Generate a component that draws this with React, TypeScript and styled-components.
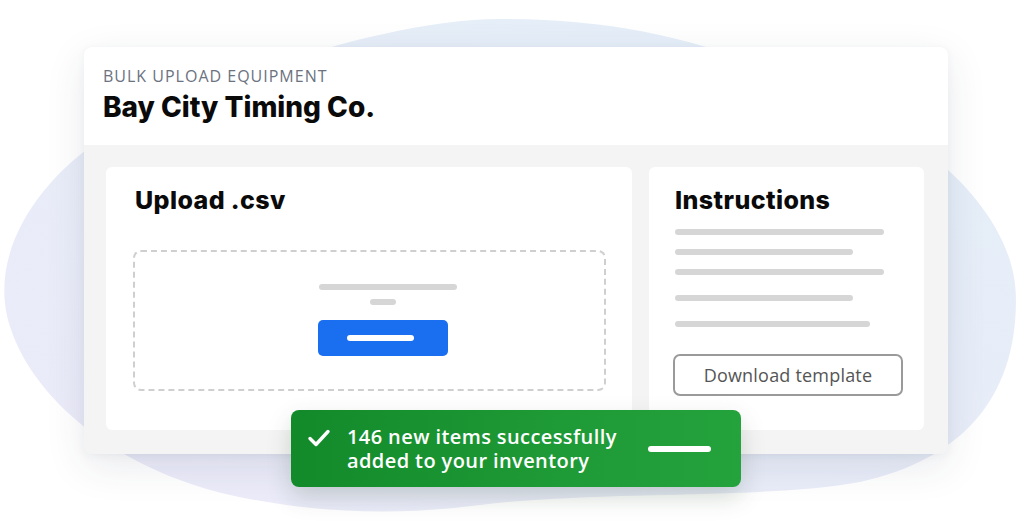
import React from "react";
import styled, { createGlobalStyle } from "styled-components";

const GlobalStyle = createGlobalStyle`
  body {
    margin: 0;
    background: #ffffff;
    font-family: "Open Sans", "Liberation Sans", sans-serif;
  }
`;

const Stage = styled.div`
  position: relative;
  width: 1024px;
  height: 526px;
  overflow: hidden;
  padding: 47px 0 0 84px;
  box-sizing: border-box;
`;

const Blob = styled.svg`
  position: absolute;
  left: 0;
  top: 0;
  z-index: 0;
`;

const Card = styled.div`
  position: relative;
  z-index: 1;
  width: 864px;
  border-radius: 8px;
  overflow: hidden;
  background: #f4f4f4;
  box-shadow: 0 12px 40px rgba(40, 50, 80, 0.1), 0 2px 8px rgba(40, 50, 80, 0.05);
`;

const Header = styled.div`
  background: #ffffff;
  height: 98px;
  box-sizing: border-box;
  padding: 19px 19px 0;
`;

const Eyebrow = styled.div`
  font-size: 16px;
  line-height: 20px;
  letter-spacing: 1px;
  color: #6b7280;
`;

const Company = styled.div`
  margin-top: 5px;
  font-family: Inter, "Liberation Sans", sans-serif;
  font-weight: 800;
  font-size: 28px;
  line-height: 32px;
  color: #0a0a0a;
`;

const Body = styled.div`
  display: flex;
  gap: 17px;
  padding: 22px 24px 24px 22px;
`;

const Panel = styled.div<{ $width: number; $pad: number }>`
  width: ${(p) => p.$width}px;
  height: 263px;
  box-sizing: border-box;
  background: #ffffff;
  border-radius: 6px;
  padding: 19px 0 0 ${(p) => p.$pad}px;
  display: flex;
  flex-direction: column;
`;

const PanelTitle = styled.div`
  font-family: Inter, "Liberation Sans", sans-serif;
  font-weight: 800;
  font-size: 25px;
  line-height: 28px;
  letter-spacing: 0.4px;
  color: #0a0a0a;
`;

const DropZone = styled.div`
  margin: 36px 0 0 -2px;
  width: 473px;
  height: 141px;
  box-sizing: border-box;
  border: 2px dashed #cfcfcf;
  border-radius: 8px;
  display: flex;
  flex-direction: column;
  align-items: center;
  padding: 32px 0 0 26px;
`;

const Bar = styled.div<{ $w: number; $color?: string; $shift?: number }>`
  width: ${(p) => p.$w}px;
  height: 6px;
  border-radius: 3px;
  background: ${(p) => p.$color || "#d6d6d6"};
  transform: translateX(${(p) => p.$shift || 0}px);
`;

const BarStack = styled.div`
  display: flex;
  flex-direction: column;
  align-items: center;
  gap: 9px;
`;

const BlueButton = styled.div`
  margin-top: 15px;
  width: 130px;
  height: 36px;
  border-radius: 5px;
  background: #1a6ff0;
  display: flex;
  align-items: center;
  justify-content: center;
`;

const Lines = styled.div`
  margin-top: 15px;
  display: flex;
  flex-direction: column;
`;

const Line = styled(Bar)<{ $gap: number }>`
  margin-top: ${(p) => p.$gap}px;
`;

const OutlineButton = styled.div`
  margin: 27px 0 0 -2px;
  width: 230px;
  height: 42px;
  box-sizing: border-box;
  border: 2px solid #9a9a9a;
  border-radius: 7px;
  display: flex;
  align-items: center;
  justify-content: center;
  font-size: 18px;
  letter-spacing: 0.2px;
  color: #555555;
`;

const Toast = styled.div`
  position: absolute;
  z-index: 2;
  left: 291px;
  top: 410px;
  width: 450px;
  height: 77px;
  box-sizing: border-box;
  border-radius: 8px;
  background: linear-gradient(90deg, #138a2a 0%, #1e9a36 60%, #24a23c 100%);
  box-shadow: 0 10px 24px rgba(20, 60, 30, 0.18);
  display: flex;
  align-items: center;
  padding: 0 30px 0 16px;
`;

const Check = styled.svg`
  flex: none;
  margin-top: -22px;
`;

const ToastText = styled.div`
  margin-left: 16px;
  flex: 1;
  color: #ffffff;
  font-weight: 600;
  font-size: 20px;
  line-height: 24px;
  letter-spacing: 0.4px;
`;

export default function App() {
  return (
    <>
      <GlobalStyle />
      <Stage>
        <Blob width="1024" height="526" viewBox="0 0 1024 526">
          <defs>
            <linearGradient id="blobFill" x1="0.75" y1="0.1" x2="0.15" y2="0.9">
              <stop offset="0" stopColor="#e5eef8" />
              <stop offset="0.5" stopColor="#e8edf8" />
              <stop offset="1" stopColor="#ebebf9" />
            </linearGradient>
          </defs>
          <path
            d="M 500 19 C 620 19, 700 40, 800 80 C 900 120, 1016 200, 1016 300 C 1016 400, 960 460, 860 482 C 760 500, 600 490, 480 505 C 380 518, 300 510, 230 495 C 120 470, 30 400, 8 320 C -10 250, 40 180, 100 140 C 180 90, 380 19, 500 19 Z"
            fill="url(#blobFill)"
          />
        </Blob>
        <Card>
          <Header>
            <Eyebrow>BULK UPLOAD EQUIPMENT</Eyebrow>
            <Company>Bay City Timing Co.</Company>
          </Header>
          <Body>
            <Panel $width={526} $pad={29}>
              <PanelTitle>Upload .csv</PanelTitle>
              <DropZone>
                <BarStack>
                  <Bar $w={138} $shift={5} />
                  <Bar $w={26} $shift={0} />
                </BarStack>
                <BlueButton>
                  <Bar $w={67} $color="#ffffff" $shift={-2} />
                </BlueButton>
              </DropZone>
            </Panel>
            <Panel $width={275} $pad={26}>
              <PanelTitle>Instructions</PanelTitle>
              <Lines>
                <Line $w={209} $gap={0} />
                <Line $w={178} $gap={14} />
                <Line $w={209} $gap={14} />
                <Line $w={178} $gap={20} />
                <Line $w={195} $gap={20} />
              </Lines>
              <OutlineButton>Download template</OutlineButton>
            </Panel>
          </Body>
        </Card>
        <Toast>
          <Check width="24" height="20" viewBox="0 0 24 20">
            <path
              d="M3 10.5 L9 16.5 L21 3.5"
              fill="none"
              stroke="#ffffff"
              strokeWidth="3.4"
              strokeLinecap="round"
              strokeLinejoin="round"
            />
          </Check>
          <ToastText>
            146 new items successfully
            <br />
            added to your inventory
          </ToastText>
          <Bar $w={63} $color="#ffffff" />
        </Toast>
      </Stage>
    </>
  );
}
